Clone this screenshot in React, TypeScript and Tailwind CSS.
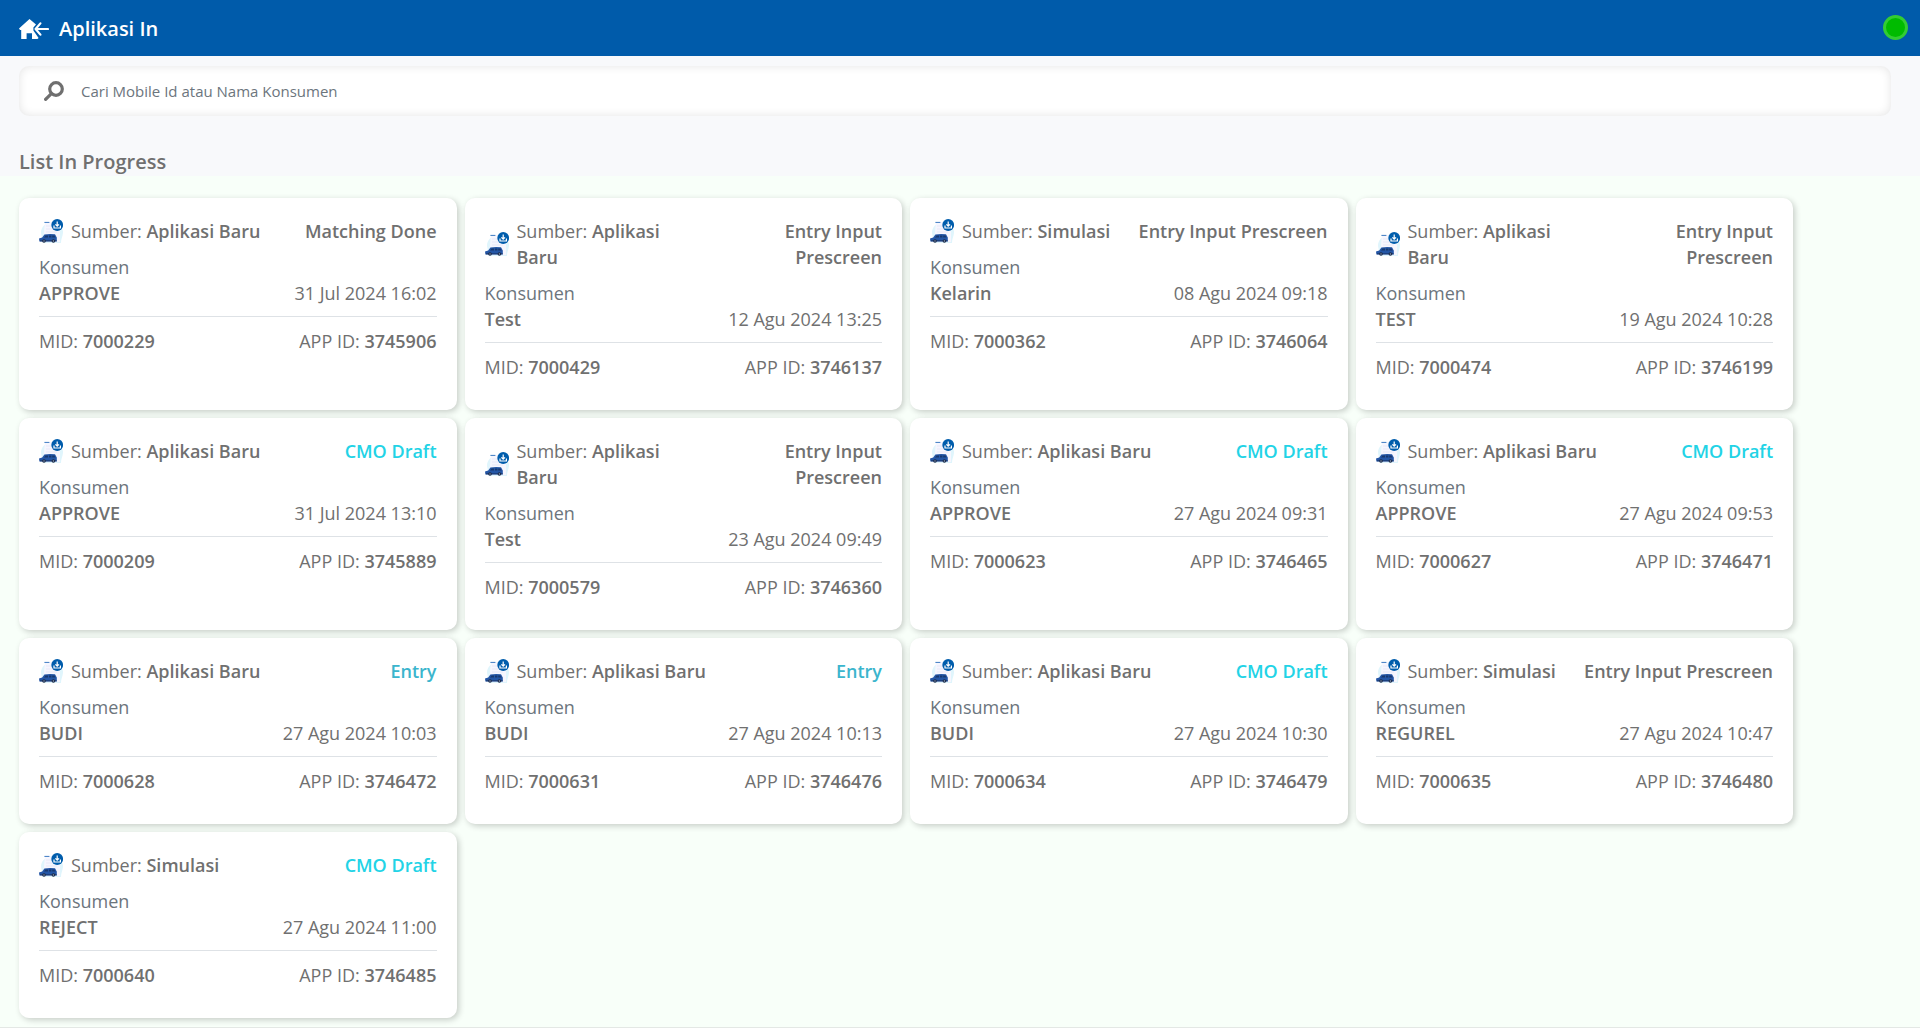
import { useId, useState } from "react";

type Application = {
  source: string;
  status: string;
  customer: string;
  date: string;
  mid: string;
  appId: string;
};

const applications: Application[] = [
  { source: "Aplikasi Baru", status: "Matching Done", customer: "APPROVE", date: "31 Jul 2024 16:02", mid: "7000229", appId: "3745906" },
  { source: "Aplikasi Baru", status: "Entry Input Prescreen", customer: "Test", date: "12 Agu 2024 13:25", mid: "7000429", appId: "3746137" },
  { source: "Simulasi", status: "Entry Input Prescreen", customer: "Kelarin", date: "08 Agu 2024 09:18", mid: "7000362", appId: "3746064" },
  { source: "Aplikasi Baru", status: "Entry Input Prescreen", customer: "TEST", date: "19 Agu 2024 10:28", mid: "7000474", appId: "3746199" },
  { source: "Aplikasi Baru", status: "CMO Draft", customer: "APPROVE", date: "31 Jul 2024 13:10", mid: "7000209", appId: "3745889" },
  { source: "Aplikasi Baru", status: "Entry Input Prescreen", customer: "Test", date: "23 Agu 2024 09:49", mid: "7000579", appId: "3746360" },
  { source: "Aplikasi Baru", status: "CMO Draft", customer: "APPROVE", date: "27 Agu 2024 09:31", mid: "7000623", appId: "3746465" },
  { source: "Aplikasi Baru", status: "CMO Draft", customer: "APPROVE", date: "27 Agu 2024 09:53", mid: "7000627", appId: "3746471" },
  { source: "Aplikasi Baru", status: "Entry", customer: "BUDI", date: "27 Agu 2024 10:03", mid: "7000628", appId: "3746472" },
  { source: "Aplikasi Baru", status: "Entry", customer: "BUDI", date: "27 Agu 2024 10:13", mid: "7000631", appId: "3746476" },
  { source: "Aplikasi Baru", status: "CMO Draft", customer: "BUDI", date: "27 Agu 2024 10:30", mid: "7000634", appId: "3746479" },
  { source: "Simulasi", status: "Entry Input Prescreen", customer: "REGUREL", date: "27 Agu 2024 10:47", mid: "7000635", appId: "3746480" },
  { source: "Simulasi", status: "CMO Draft", customer: "REJECT", date: "27 Agu 2024 11:00", mid: "7000640", appId: "3746485" },
];

const statusColors: Record<string, string> = {
  "CMO Draft": "text-[#22d3e6]",
  Entry: "text-[#3bb5cd]",
};

function HomeBackIcon() {
  return (
    <svg viewBox="0 0 30 20" className="h-5 w-[30px]" aria-hidden="true">
      <path d="M10.5 0 L0 9.4 L1 11 H2.2 V20 H7.6 V14.2 H13 V20 H18.4 L19.6 19 L14.4 11.6 V8.4 L17 5.4 Z" fill="white" />
      <path d="M21.4 4.4 L16.6 10 L21.4 15.6 M17 10 H29" fill="none" stroke="white" strokeWidth="2.2" strokeLinecap="round" strokeLinejoin="round" />
    </svg>
  );
}

function SearchIcon() {
  return (
    <svg viewBox="0 0 20 20" className="h-5 w-5 shrink-0" aria-hidden="true">
      <circle cx="12" cy="8" r="6.3" fill="none" stroke="#6f6f6f" strokeWidth="3.2" />
      <path d="M7.4 12.6 L1.6 18.4" stroke="#6f6f6f" strokeWidth="3.2" strokeLinecap="round" />
    </svg>
  );
}

function SourceIcon() {
  return (
    <svg viewBox="0 0 24 24" className="h-6 w-6 shrink-0" aria-hidden="true">
      <path d="M2 14 C2 8 6 4 12 4 C19 4 24.5 8 24 14 C23.5 18 22 20 22 24 H4 Z" fill="#e0f5fc" />
      <path d="M6 3 H17 L21 9 V23 H4 Z" fill="#f6f6fe" />
      <path d="M5.4 3.4 H10.4" stroke="#3d7ac2" strokeWidth="1" />
      <path d="M7 7 H12 M7 10 H15 M7 13 H18" stroke="#e8e8f8" strokeWidth="1" />
      <path d="M0 19.4 L3.2 18.4 L5.4 15.4 Q10 14.6 16 15.2 L17.8 18.4 V22.4 H0.4 Z" fill="#2456a6" />
      <path d="M5 18.4 L6.6 16.4 H9 V18.4 Z M10 16.4 H12.4 V18.4 H10 Z M13.2 16.4 H15.4 L16.4 18.4 H13.2 Z" fill="#18386f" />
      <path d="M1 21.8 H17.6" stroke="#1b3a70" strokeWidth="1" />
      <circle cx="5" cy="22" r="1.8" fill="#1d2a45" />
      <circle cx="14.4" cy="22" r="1.8" fill="#1d2a45" />
      <circle cx="5" cy="22" r="0.7" fill="#8fa3c4" />
      <circle cx="14.4" cy="22" r="0.7" fill="#8fa3c4" />
      <circle cx="18.2" cy="6" r="5.9" fill="#005dac" />
      <path d="M18.2 2.4 V7 M16.4 5.4 L18.2 7.2 L20 5.4 M15 6.4 V9 H21.4 V6.4" fill="none" stroke="white" strokeWidth="1.2" />
    </svg>
  );
}

function ApplicationCard({ item }: { item: Application }) {
  return (
    <li className="rounded-[10px] bg-white px-5 pt-5 pb-[30px] shadow-[2px_2px_6px_rgba(0,0,0,0.2)]">
      <div className="mb-2.5 flex items-center justify-between">
        <div className="flex items-center gap-2">
          <SourceIcon />
          <p>
            Sumber: <span className="font-semibold">{item.source}</span>
          </p>
        </div>
        <p className={`text-right font-semibold ${statusColors[item.status] ?? ""}`}>{item.status}</p>
      </div>
      <p className="text-[#6c757d]">Konsumen</p>
      <div className="flex justify-between border-b border-[#dee2e6] pb-2.5">
        <p className="font-semibold">{item.customer}</p>
        <p>{item.date}</p>
      </div>
      <div className="mt-[11px] flex justify-between">
        <p>
          MID: <span className="font-semibold">{item.mid}</span>
        </p>
        <p>
          APP ID: <span className="font-semibold">{item.appId}</span>
        </p>
      </div>
    </li>
  );
}

export default function App() {
  const searchId = useId();
  const [query, setQuery] = useState("");
  const needle = query.trim().toLowerCase();
  const visible = applications.filter(
    (item) => item.mid.includes(needle) || item.customer.toLowerCase().includes(needle),
  );

  return (
    <div className="flex min-h-screen flex-col bg-[#f8fff9] font-['Open_Sans',sans-serif] text-[18px] leading-[26px] text-[#707070]">
      <header className="flex h-14 items-center justify-between bg-[#005baa] pt-1 pr-3 pb-0.5 pl-[19px] text-white">
        <div className="flex items-center gap-2.5">
          <a href="#home" aria-label="Kembali ke beranda">
            <HomeBackIcon />
          </a>
          <h1 className="text-[20px] font-semibold">Aplikasi In</h1>
        </div>
        <span role="status" aria-label="Online" className="mb-1 h-[25px] w-[25px] rounded-full border-3 border-[#33cc33] bg-[#00bb00]" />
      </header>

      <section className="bg-[#f8f9fb] pt-2.5 pr-[29px] pl-[19px]">
        <div className="flex h-[50px] items-center gap-[17px] rounded-[10px] bg-white px-[25px] shadow-[inset_0_0_10px_rgba(0,0,0,0.11)]">
          <label htmlFor={searchId} aria-label="Cari">
            <SearchIcon />
          </label>
          <input
            id={searchId}
            type="text"
            value={query}
            onChange={(event) => setQuery(event.target.value)}
            placeholder="Cari Mobile Id atau Nama Konsumen"
            className="w-full bg-transparent text-[15px] outline-none placeholder:text-[#6c757d]"
          />
        </div>
        <h2 className="pt-[33px] pb-px text-[20px] font-semibold">List In Progress</h2>
      </section>

      <main className="flex-1 border-b border-[#e4e8e5] pt-[22px] pr-[127px] pb-[9px] pl-[19px]">
        <ul className="grid grid-cols-4 gap-2">
          {visible.map((item) => (
            <ApplicationCard key={item.mid} item={item} />
          ))}
        </ul>
      </main>
    </div>
  );
}
